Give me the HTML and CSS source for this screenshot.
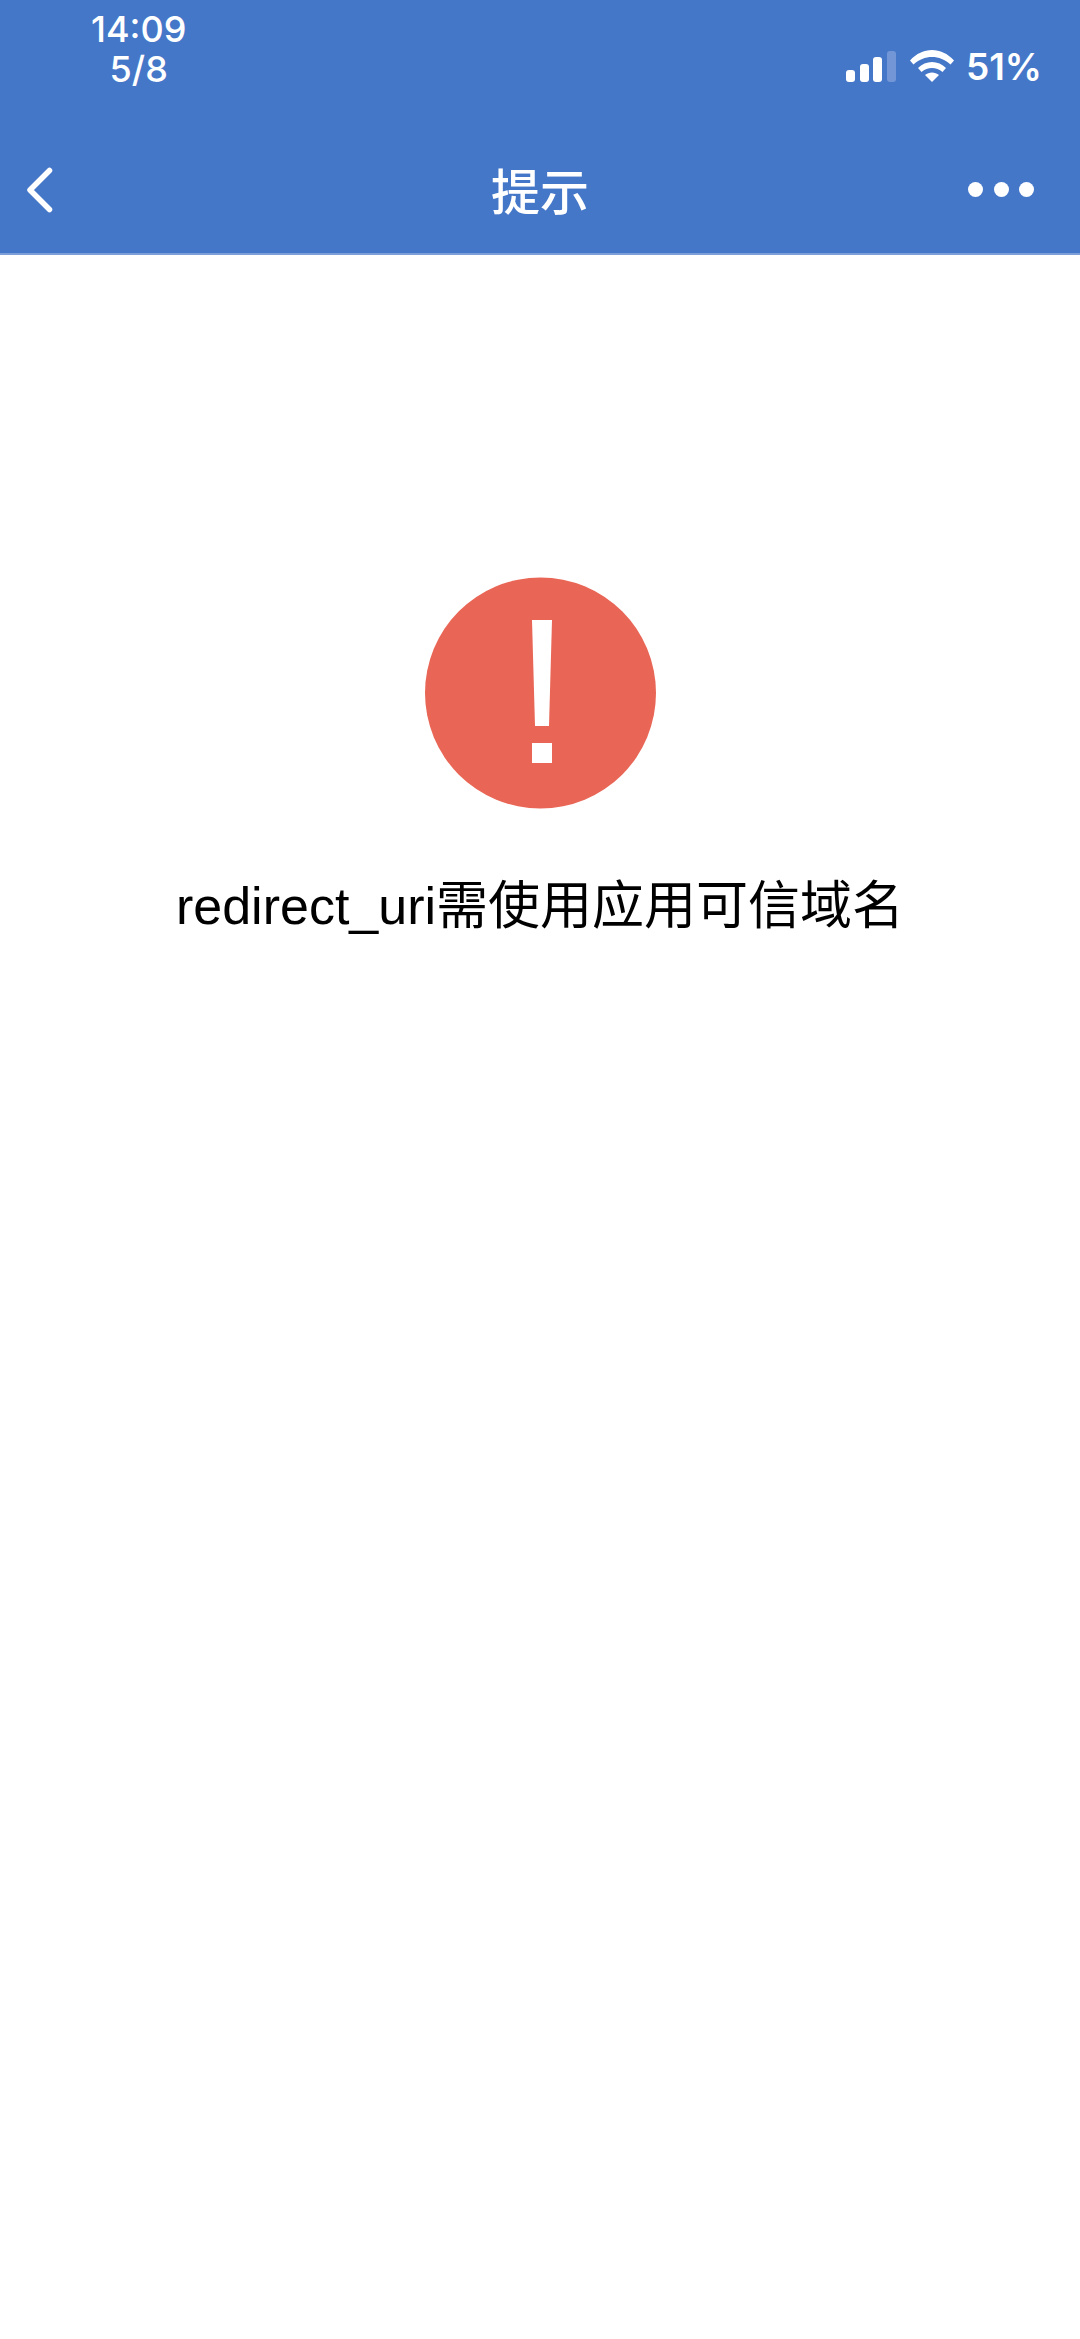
FILE: index.html
```html
<!DOCTYPE html>
<html lang="zh-CN">
<head>
    <meta charset="UTF-8">
    <meta name="viewport" content="width=device-width, initial-scale=1.0">
    <title>提示</title>
    <link rel="stylesheet" href="styles.css">
</head>
<body>
    <header class="top-bar">
        <div class="status-bar">
            <div class="clock">
                <div>14:09</div>
                <div>5/8</div>
            </div>
            <div class="status-icons">
                <div class="signal">
                    <span class="bar bar-1"></span>
                    <span class="bar bar-2"></span>
                    <span class="bar bar-3"></span>
                    <span class="bar bar-4"></span>
                </div>
                <svg class="wifi" width="44" height="32" viewBox="0 0 44 32">
                    <path d="M0 10.5 C12.5 -3.5 31.5 -3.5 44 10.5 L40.5 14.5 C30 4.5 14 4.5 3.5 14.5 Z" fill="#fff"/>
                    <path d="M8 18 C15.5 10 28.5 10 36 18 L32.5 22 C26.5 16.5 17.5 16.5 11.5 22 Z" fill="#fff"/>
                    <path d="M15 25 C19 21.5 25 21.5 29 25 L22 32 Z" fill="#fff"/>
                </svg>
                <div class="battery">51%</div>
            </div>
        </div>
        <nav class="nav-bar">
            <svg class="back" width="28" height="48" viewBox="0 0 28 48">
                <path d="M24.5 4.5 L5 24 L24.5 43.5" fill="none" stroke="#fff" stroke-width="5.5" stroke-linecap="round" stroke-linejoin="round"/>
            </svg>
            <div class="nav-title">提示</div>
            <div class="more">
                <span class="dot"></span>
                <span class="dot"></span>
                <span class="dot"></span>
            </div>
        </nav>
    </header>

    <main class="message">
        <svg class="warn-icon" width="232" height="232" viewBox="0 0 232 232">
            <circle cx="116.5" cy="116" r="115.5" fill="#e96555"/>
            <path d="M108 43 H128 L125 149 H111 Z" fill="#fff"/>
            <rect x="108" y="166" width="20" height="20" fill="#fff"/>
        </svg>
        <p class="message-text">redirect_uri需使用应用可信域名</p>
    </main>
</body>
</html>
```

FILE: styles.css
```css
body {
    margin: 0;
    height: 2339px;
    overflow: hidden;
    background-color: #fff;
    font-family: "Liberation Sans", "Noto Sans CJK SC", sans-serif;
}

.top-bar {
    height: 253px;
    background-color: #4577c9;
    border-bottom: 2px solid #7d9fd8;
    color: #fff;
}

.status-bar {
    height: 126px;
    display: flex;
    justify-content: space-between;
    padding: 9px 38px 0 91px;
    box-sizing: border-box;
}

.clock {
    font-family: Inter, sans-serif;
    font-size: 36px;
    font-weight: 500;
    line-height: 40px;
    text-align: center;
}

.status-icons {
    display: flex;
    align-items: flex-end;
    height: 73px;
}

.signal {
    display: flex;
    align-items: flex-end;
    gap: 4.5px;
    margin-right: 14px;
}

.bar {
    width: 9px;
    border-radius: 3px;
    background-color: #fff;
}

.bar-1 {
    height: 12px;
}

.bar-2 {
    height: 18px;
}

.bar-3 {
    height: 25px;
}

.bar-4 {
    height: 31px;
    background-color: #7397d6;
}

.wifi {
    margin-right: 12px;
}

.battery {
    font-family: Inter, sans-serif;
    font-size: 37px;
    font-weight: 600;
    line-height: 32px;
    margin-bottom: -1px;
}

.nav-bar {
    display: flex;
    align-items: center;
    justify-content: space-between;
    height: 125px;
    padding: 3px 46px 0 25px;
    box-sizing: border-box;
    position: relative;
}

.nav-title {
    position: absolute;
    left: 0;
    right: 0;
    margin-top: -4px;
    text-align: center;
    font-family: "Noto Sans CJK SC", sans-serif;
    font-size: 49px;
    font-weight: 500;
}

.more {
    display: flex;
    gap: 10.5px;
    margin-top: -2px;
}

.dot {
    width: 15px;
    height: 15px;
    border-radius: 50%;
    background-color: #fff;
}

.message {
    display: flex;
    flex-direction: column;
    align-items: center;
    padding-top: 322px;
}

.warn-icon {
    display: block;
}

.message-text {
    margin: 62px 0 0;
    font-size: 52px;
    line-height: 70px;
    color: #000;
}
```
